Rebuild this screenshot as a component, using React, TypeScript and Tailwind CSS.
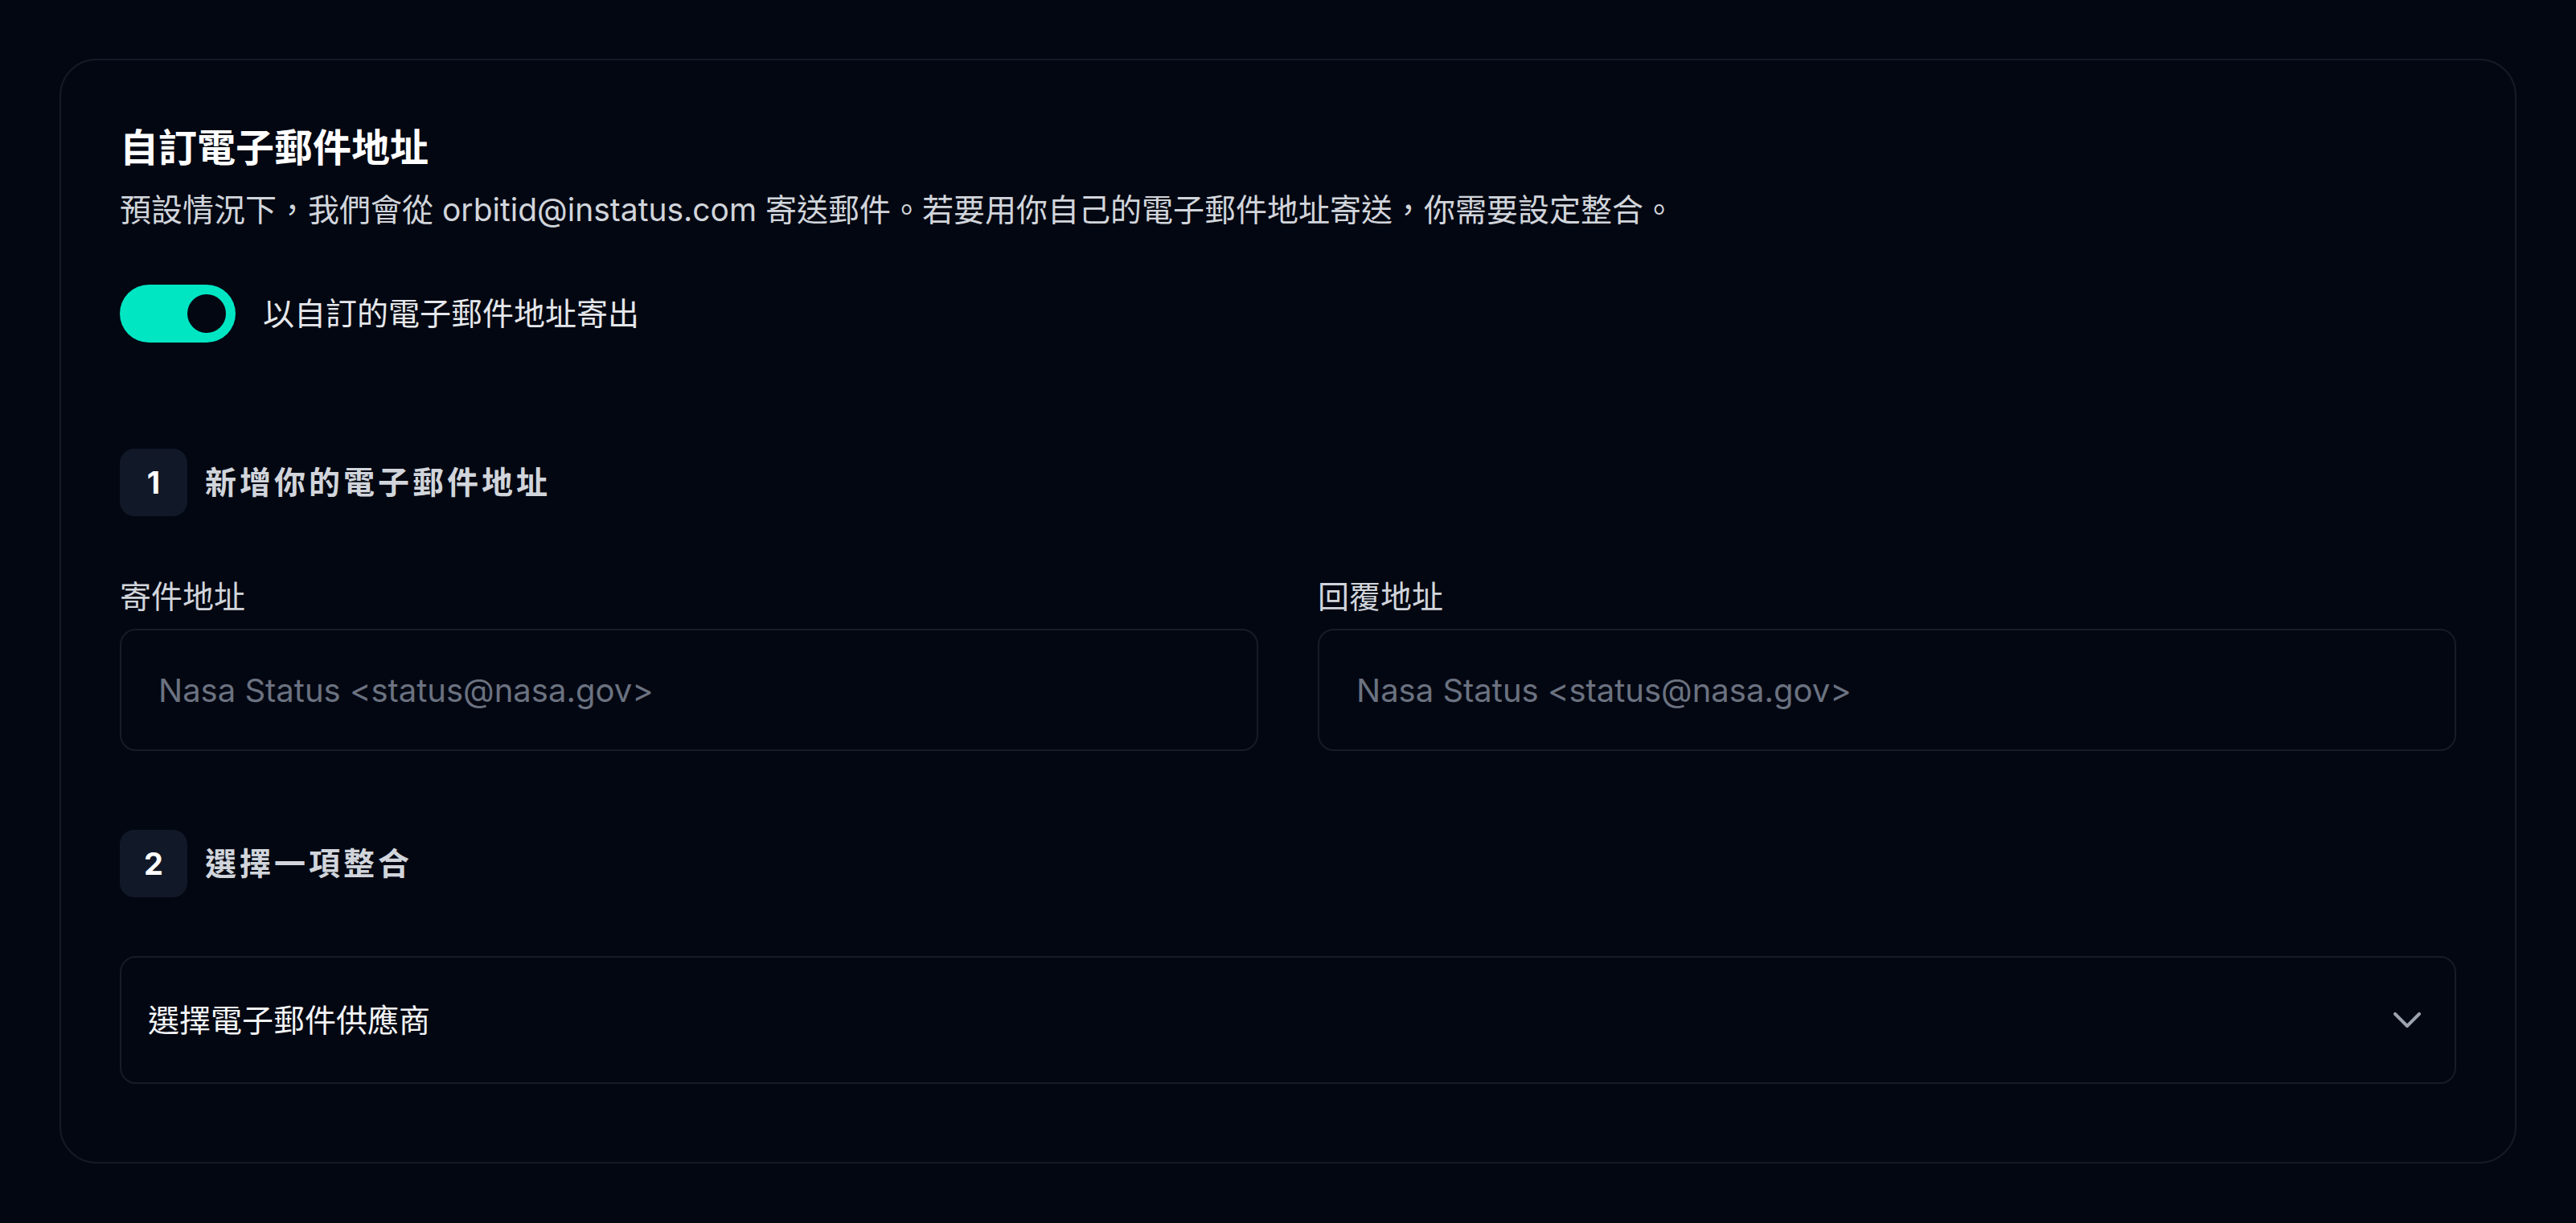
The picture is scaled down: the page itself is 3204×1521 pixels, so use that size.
import { useState } from "react";

const font = { fontFamily: '"Inter", "Noto Sans CJK TC", sans-serif' };

function StepHeading({ n, label }: { n: number; label: string }) {
  return (
    <div className="flex items-center gap-[22px]">
      <div className="flex h-[84px] w-[84px] items-center justify-center rounded-[18px] bg-[#111827] text-[38px] font-bold text-white">
        {n}
      </div>
      <h3 className="text-[39px] font-bold leading-[52px] tracking-[4px] text-[#d1d5db]">
        {label}
      </h3>
    </div>
  );
}

function AddressField({ label, placeholder }: { label: string; placeholder: string }) {
  return (
    <div className="flex flex-col">
      <label className="text-[39px] leading-[52px] text-[#d1d5db]">{label}</label>
      <input
        className="mt-[14px] h-[152px] rounded-[20px] border-2 border-[#161c28] bg-transparent px-[46px] text-[40px] text-white outline-none placeholder:text-[#6b7280]"
        placeholder={placeholder}
      />
    </div>
  );
}

export default function App() {
  const [enabled, setEnabled] = useState(true);

  return (
    <div className="min-h-screen bg-[#030712] px-[74px] pb-[74px] pt-[73px]" style={font}>
      <div className="rounded-[46px] border-2 border-[#141a26] px-[73px] pb-[97px] pt-[79px]">
        <h2 className="text-[48px] font-bold leading-[60px] text-white">自訂電子郵件地址</h2>
        <p className="mt-[21px] text-[39px] leading-[52px] text-[#d1d5db]">
          預設情況下，我們會從 orbitid@instatus.com 寄送郵件。若要用你自己的電子郵件地址寄送，你需要設定整合。
        </p>

        <div className="mt-[67px] flex items-center gap-[34px]">
          <button
            onClick={() => setEnabled(!enabled)}
            className={`flex h-[72px] w-[144px] items-center rounded-full px-[12px] ${
              enabled ? "justify-end bg-[#00e6c3]" : "justify-start bg-[#1f2937]"
            }`}
          >
            <span className="h-[48px] w-[48px] rounded-full bg-[#030712]" />
          </button>
          <span className="text-[39px] leading-[52px] text-[#e5e7eb]">以自訂的電子郵件地址寄出</span>
        </div>

        <div className="mt-[132px]">
          <StepHeading n={1} label="新增你的電子郵件地址" />
        </div>

        <div className="mt-[74px] grid grid-cols-2 gap-[74px]">
          <AddressField label="寄件地址" placeholder="Nasa Status <status@nasa.gov>" />
          <AddressField label="回覆地址" placeholder="Nasa Status <status@nasa.gov>" />
        </div>

        <div className="mt-[98px]">
          <StepHeading n={2} label="選擇一項整合" />
        </div>

        <button className="mt-[73px] flex h-[159px] w-full items-center justify-between rounded-[20px] border-2 border-[#161c28] pl-[33px] pr-[42px]">
          <span className="text-[39px] leading-[52px] text-[#f3f4f6]">選擇電子郵件供應商</span>
          <svg width="34" height="20" viewBox="0 0 34 20" fill="none">
            <polyline
              points="2,2 17,17 32,2"
              stroke="#9ca3af"
              strokeWidth="4"
              strokeLinecap="round"
              strokeLinejoin="round"
            />
          </svg>
        </button>
      </div>
    </div>
  );
}
